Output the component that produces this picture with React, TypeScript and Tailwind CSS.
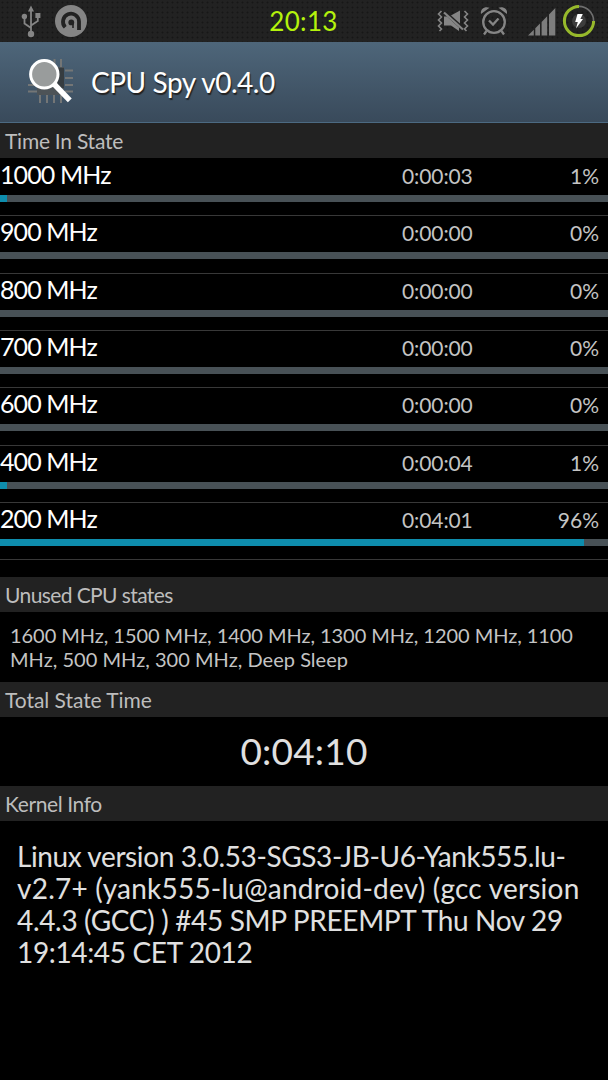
/**
 * CPU Spy
 * Shows how long the CPU has spent in each frequency state
 */

import React from 'react'

interface CpuState {
  freq: string
  time: string
  percent: number
  fill: number
}

const states: CpuState[] = [
  { freq: '1000 MHz', time: '0:00:03', percent: 1, fill: 1.15 },
  { freq: '900 MHz', time: '0:00:00', percent: 0, fill: 0 },
  { freq: '800 MHz', time: '0:00:00', percent: 0, fill: 0 },
  { freq: '700 MHz', time: '0:00:00', percent: 0, fill: 0 },
  { freq: '600 MHz', time: '0:00:00', percent: 0, fill: 0 },
  { freq: '400 MHz', time: '0:00:04', percent: 1, fill: 1.15 },
  { freq: '200 MHz', time: '0:04:01', percent: 96, fill: 96.1 },
]

function UsbIcon() {
  return (
    <svg width="20" height="33" viewBox="0 0 20 33" fill="#858585" stroke="#858585">
      <path d="M10 27V5M10 23L3.5 18.5V12M10 20.5L16.8 16V11" fill="none" strokeWidth="1.8" />
      <path d="M10 0.5L13 6.5H7Z" stroke="none" />
      <circle cx="3.4" cy="11.4" r="2.7" stroke="none" />
      <rect x="14.4" y="8" width="5" height="5" stroke="none" />
      <circle cx="10" cy="29" r="3.2" stroke="none" />
    </svg>
  )
}

function AppBadgeIcon() {
  return (
    <svg width="34" height="34" viewBox="0 0 34 34" fill="none">
      <circle cx="17" cy="17" r="16" fill="#858585" />
      <path d="M11.2 23.2A8 8 0 1 1 25 17.5V26" stroke="#222" strokeWidth="3.8" />
      <circle cx="17.3" cy="18.4" r="2.9" fill="#222" />
      <path d="M19 19.5V24" stroke="#222" strokeWidth="1.6" />
    </svg>
  )
}

function VibrateMuteIcon() {
  return (
    <svg width="32" height="24" viewBox="0 0 32 24" fill="#858585">
      <path d="M7 7.5H10L22 18.5V22L14 16.5H7ZM13 7L23 1.5V16Z" />
      <path d="M8 2L27 19" stroke="#222" strokeWidth="1.4" />
      <path d="M7 3.5L26 20.5" stroke="#858585" strokeWidth="2.2" />
      <path
        d="M4.5 2L1.5 5L4.5 8L1.5 11L4.5 14L1.5 17L4.5 20L2.5 22M27.5 2L30.5 5L27.5 8L30.5 11L27.5 14L30.5 17L27.5 20L29.5 22"
        fill="none"
        stroke="#858585"
        strokeWidth="1.6"
      />
    </svg>
  )
}

function AlarmIcon() {
  return (
    <svg width="28" height="30" viewBox="0 0 28 30" fill="none" stroke="#858585" strokeWidth="2.3">
      <circle cx="14" cy="16" r="10.8" />
      <path d="M9 14.5L13 18.5L18.5 12.5M6.5 25L4 28.5M21.5 25L24 28.5" />
      <path d="M1 8C0 3 5 0 9.5 1.8ZM27 8C28 3 23 0 18.5 1.8Z" fill="#858585" stroke="none" />
    </svg>
  )
}

function SignalIcon() {
  return (
    <svg width="28" height="28" viewBox="0 0 28 28" fill="#7d7d7d">
      <path d="M0 27.5L5.8 21.7V27.5ZM7.3 20.2L12 15.5V27.5H7.3ZM13.6 14L19.2 8.3V27.5H13.6ZM21 6.5L27.3 0V27.5H21Z" />
    </svg>
  )
}

function BatteryRing() {
  return (
    <svg width="34" height="34" viewBox="0 0 34 34" fill="none">
      <circle cx="17" cy="17" r="14.6" stroke="#6e6e6e" strokeWidth="1.6" />
      <path d="M17 2.4A14.6 14.6 0 1 0 31.6 17" stroke="#97b92b" strokeWidth="3" />
      <circle cx="17" cy="17" r="7" fill="#3d3d3d" />
      <path d="M15.5 10H20.8L18.4 15H21L14 24.5L15.8 18H13.2Z" fill="#fff" />
    </svg>
  )
}

function AppIcon() {
  return (
    <svg width="48" height="48" viewBox="0 0 48 48" fill="none">
      <path
        d="M27.5 1V9M34 1V9M38 12.5H46M38 20H46M38 27H46M38 33.5H46M13 37V45M20 37V45M27 37V45M34 37V45M1 27H10M1 33.5H10"
        stroke="#747676"
        strokeWidth="2"
      />
      <rect x="10" y="9" width="27" height="28" fill="#4d5357" />
      <rect x="31" y="10" width="6" height="20" fill="#363c40" />
      <path d="M26 25L42.8 42.3" stroke="#fff" strokeWidth="5.4" />
      <circle cx="17.3" cy="16.3" r="13.7" fill="#999c9c" stroke="#fff" strokeWidth="3" />
    </svg>
  )
}

function SectionHeader({ title, tracking }: { title: string; tracking: string }) {
  return (
    <h2 className={`h-[35px] shrink-0 bg-[#222] pl-[5px] text-[21px] leading-[36px] text-[#bdbdbd] ${tracking}`}>
      {title}
    </h2>
  )
}

function StateRow({ state }: { state: CpuState }) {
  return (
    <div className="h-[57.35px] border-b border-[#383838]">
      <div className="flex h-[36px] items-baseline leading-[30px]">
        <span className="w-[402px] text-[25px] tracking-[-0.9px] text-white">{state.freq}</span>
        <span className="text-[21px] tracking-[-0.1px] text-[#c4c4c4]">{state.time}</span>
        <span className="ml-auto pr-[9px] text-[21px] text-[#c4c4c4]">{state.percent}%</span>
      </div>
      <div className="h-[7px] bg-[#485156]">
        <div className="h-full bg-[#0e8dad]" style={{ width: `${state.fill}%` }} />
      </div>
    </div>
  )
}

export default function App() {
  return (
    <div className="flex h-[1080px] w-[608px] flex-col overflow-hidden whitespace-nowrap bg-black font-['Lato',sans-serif]">
      {/* Status bar */}
      <div className="grid h-[42px] shrink-0 grid-cols-3 items-center bg-[#222] bg-[radial-gradient(circle,#171717_0.8px,transparent_1.2px)] bg-[length:5px_5px]">
        <div className="flex items-center gap-[13px] pl-[21px]">
          <UsbIcon />
          <AppBadgeIcon />
        </div>
        <div className="pr-[1px] text-center text-[26px] leading-[42px] tracking-[0.3px] text-[#b5f20c]">20:13</div>
        <div className="flex items-center justify-end pr-[12px]">
          <VibrateMuteIcon />
          <div className="ml-[11px] mr-[20px]">
            <AlarmIcon />
          </div>
          <div className="pt-[2px]">
            <SignalIcon />
          </div>
          <div className="ml-[6px]">
            <BatteryRing />
          </div>
        </div>
      </div>

      {/* Title bar */}
      <div className="flex h-[81px] shrink-0 items-center border-b border-[#4c6a82] bg-linear-to-b from-[#4e667a] to-[#394a5b] pl-[27px]">
        <AppIcon />
        <h1 className="ml-[16px] text-[28px] tracking-[-0.45px] text-white [text-shadow:1px_2px_1px_#222]">
          CPU Spy v0.4.0
        </h1>
      </div>

      <SectionHeader title="Time In State" tracking="tracking-[-0.25px]" />
      <div className="h-[419px] shrink-0 pt-[1px]">
        {states.map((state) => (
          <StateRow key={state.freq} state={state} />
        ))}
      </div>

      <SectionHeader title="Unused CPU states" tracking="tracking-[-0.6px]" />
      <div className="h-[70px] shrink-0 pl-[10px] pt-[11px] text-[20px] leading-[24px] text-[#c4c4c4]">
        <p className="tracking-[-0.05px]">1600 MHz, 1500 MHz, 1400 MHz, 1300 MHz, 1200 MHz, 1100</p>
        <p className="tracking-[0.03px]">MHz, 500 MHz, 300 MHz, Deep Sleep</p>
      </div>

      <SectionHeader title="Total State Time" tracking="tracking-[-0.05px]" />
      <div className="h-[69px] shrink-0 text-center text-[37px] leading-[68px] tracking-[0.2px] text-[#e0e0e0]">
        0:04:10
      </div>

      <SectionHeader title="Kernel Info" tracking="tracking-[-0.4px]" />
      <div className="pl-[17px] pt-[19px] text-[28px] leading-[32px] text-[#e0e0e0]">
        <p className="tracking-[-0.4px]">Linux version 3.0.53-SGS3-JB-U6-Yank555.lu-</p>
        <p className="tracking-[0.22px]">v2.7+ (yank555-lu@android-dev) (gcc version</p>
        <p className="tracking-[-0.33px]">4.4.3 (GCC) ) #45 SMP PREEMPT Thu Nov 29</p>
        <p className="tracking-[-0.35px]">19:14:45 CET 2012</p>
      </div>
    </div>
  )
}
